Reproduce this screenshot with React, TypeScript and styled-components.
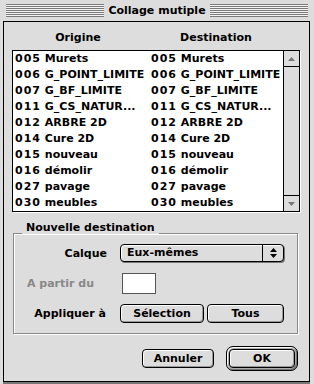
import React from "react";
import styled, { createGlobalStyle } from "styled-components";

const GlobalStyle = createGlobalStyle`
  html, body {
    margin: 0;
    padding: 0;
    background: #dddddd;
  }
  body {
    font-family: "DejaVu Sans", Verdana, sans-serif;
    font-size: 11px;
    font-weight: bold;
    color: #000000;
  }
`;

const Window = styled.div`
  width: 314px;
  height: 384px;
  box-sizing: border-box;
  display: flex;
  flex-direction: column;
  background: #dddddd;
  padding: 0 4px 2px 3px;
`;

const TitleBar = styled.div`
  height: 21px;
  display: flex;
  align-items: center;
  gap: 4px;
  padding: 0 2px 0 3px;
`;

const Stripes = styled.div`
  flex: 1;
  height: 13px;
  background: repeating-linear-gradient(
    to bottom,
    #7a7a7a 0px,
    #7a7a7a 1px,
    #f4f4f4 1px,
    #f4f4f4 2px
  );
`;

const Title = styled.span`
  font-size: 11px;
  line-height: 13px;
  white-space: nowrap;
`;

const Panel = styled.div`
  flex: 1;
  display: flex;
  flex-direction: column;
  border: 1px solid #000000;
  background: #dddddd;
  box-shadow: 0 2px 0 #777777;
  padding: 8px 9px 0 8px;
`;

const Headers = styled.div`
  display: grid;
  grid-template-columns: 130px 146px;
  height: 16px;
  line-height: 16px;
  padding-left: 1px;
  text-align: center;
`;

const ListBox = styled.div`
  margin-top: 4px;
  height: 162px;
  box-sizing: border-box;
  display: flex;
  border: 1px solid #000000;
  box-shadow: 1px 1px 0 #ffffff;
`;

const Rows = styled.div`
  flex: 1;
  background: #ffffff;
`;

const Row = styled.div`
  display: grid;
  grid-template-columns: 136px 1fr;
  height: 16px;
  line-height: 16px;
  padding-left: 2px;
  white-space: nowrap;
`;

// layer numbers are drawn wider in the original system font
const Code = styled.span`
  letter-spacing: 1px;
`;

const ScrollBar = styled.div`
  width: 15px;
  display: flex;
  flex-direction: column;
  border-left: 1px solid #000000;
  background: #dddddd;
`;

const ArrowBox = styled.div<{ $bottom?: boolean }>`
  height: 15px;
  display: flex;
  align-items: center;
  justify-content: center;
  border-bottom: ${(p) => (p.$bottom ? "none" : "1px solid #000000")};
  border-top: ${(p) => (p.$bottom ? "1px solid #000000" : "none")};
`;

const Track = styled.div`
  flex: 1;
`;

const Group = styled.div`
  position: relative;
  margin: 21px 2px 0 1px;
  padding: 4px 0 5px;
  border: 1px solid #888888;
  box-shadow: inset 1px 1px 0 #ffffff, 1px 1px 0 #ffffff;
`;

const GroupTitle = styled.span`
  position: absolute;
  top: -13px;
  left: 8px;
  padding: 0 4px;
  line-height: 13px;
  background: #dddddd;
`;

const Field = styled.div`
  display: flex;
  align-items: center;
  height: 30px;
`;

const Label = styled.span<{ $muted?: boolean; $inset?: number }>`
  width: 93px;
  box-sizing: border-box;
  margin-right: 13px;
  padding-right: ${(p) => p.$inset ?? 0}px;
  text-align: right;
  white-space: nowrap;
  color: ${(p) => (p.$muted ? "#888888" : "#000000")};
`;

const Popup = styled.div`
  width: 164px;
  height: 18px;
  box-sizing: border-box;
  display: flex;
  border: 1px solid #000000;
  border-radius: 4px;
  background: #dddddd;
  box-shadow: 1px 1px 0 #777777, inset 1px 1px 0 #ffffff;
`;

const PopupText = styled.span`
  flex: 1;
  padding-left: 6px;
  line-height: 16px;
`;

const PopupArrows = styled.span`
  width: 20px;
  display: flex;
  align-items: center;
  justify-content: center;
  border-left: 1px solid #000000;
`;

const EditBox = styled.div`
  width: 34px;
  height: 21px;
  box-sizing: border-box;
  margin-left: 2px;
  background: #ffffff;
  border: 1px solid #555555;
`;

const Buttons = styled.div`
  display: flex;
  gap: 3px;
`;

const PushButton = styled.button<{ $width: number }>`
  width: ${(p) => p.$width}px;
  height: 19px;
  padding: 0;
  border: 1px solid #000000;
  border-radius: 4px;
  background: #dddddd;
  box-shadow: inset 1px 1px 0 #ffffff, inset -1px -1px 0 #999999;
  font: inherit;
  color: #000000;
  line-height: 17px;
`;

const Footer = styled.div`
  display: flex;
  justify-content: flex-end;
  align-items: center;
  gap: 12px;
  margin-top: 12px;
  padding-right: 2px;
`;

const DefaultRing = styled.div`
  display: flex;
  padding: 2px;
  border: 1px solid #000000;
  border-radius: 7px;
  background: #aaaaaa;
  box-shadow: inset 1px 1px 0 #ffffff, inset -1px -1px 0 #777777;
`;

const rows: [string, string][] = [
  ["005", "Murets"],
  ["006", "G_POINT_LIMITE"],
  ["007", "G_BF_LIMITE"],
  ["011", "G_CS_NATUR..."],
  ["012", "ARBRE 2D"],
  ["014", "Cure 2D"],
  ["015", "nouveau"],
  ["016", "démolir"],
  ["027", "pavage"],
  ["030", "meubles"],
];

function Arrow({ down }: { down?: boolean }) {
  return (
    <svg width="7" height="4" viewBox="0 0 7 4">
      <polygon
        points={down ? "0,0 7,0 3.5,4" : "3.5,0 7,4 0,4"}
        fill="#777777"
      />
    </svg>
  );
}

function App() {
  return (
    <>
      <GlobalStyle />
      <Window>
        <TitleBar>
          <Stripes />
          <Title>Collage mutiple</Title>
          <Stripes />
        </TitleBar>
        <Panel>
          <Headers>
            <span>Origine</span>
            <span>Destination</span>
          </Headers>
          <ListBox>
            <Rows>
              {rows.map(([code, name]) => (
                <Row key={code}>
                  <span>
                    <Code>{code}</Code> {name}
                  </span>
                  <span>
                    <Code>{code}</Code> {name}
                  </span>
                </Row>
              ))}
            </Rows>
            <ScrollBar>
              <ArrowBox>
                <Arrow />
              </ArrowBox>
              <Track />
              <ArrowBox $bottom>
                <Arrow down />
              </ArrowBox>
            </ScrollBar>
          </ListBox>

          <Group>
            <GroupTitle>Nouvelle destination</GroupTitle>
            <Field>
              <Label>Calque</Label>
              <Popup>
                <PopupText>Eux-mêmes</PopupText>
                <PopupArrows>
                  <svg width="7" height="10" viewBox="0 0 7 10">
                    <polygon points="3.5,0 7,4 0,4" fill="#000000" />
                    <polygon points="0,6 7,6 3.5,10" fill="#000000" />
                  </svg>
                </PopupArrows>
              </Popup>
            </Field>
            <Field>
              <Label $muted $inset={13}>
                A partir du
              </Label>
              <EditBox />
            </Field>
            <Field>
              <Label $inset={1}>Appliquer à</Label>
              <Buttons>
                <PushButton $width={84}>Sélection</PushButton>
                <PushButton $width={77}>Tous</PushButton>
              </Buttons>
            </Field>
          </Group>

          <Footer>
            <PushButton $width={72}>Annuler</PushButton>
            <DefaultRing>
              <PushButton $width={66}>OK</PushButton>
            </DefaultRing>
          </Footer>
        </Panel>
      </Window>
    </>
  );
}

export default App;
